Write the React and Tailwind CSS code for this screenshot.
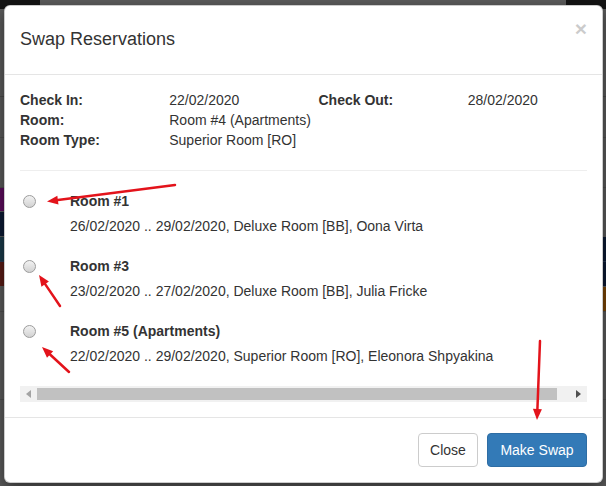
import React from 'react';

const rooms = [
  { name: 'Room #1', info: '26/02/2020 .. 29/02/2020, Deluxe Room [BB], Oona Virta' },
  { name: 'Room #3', info: '23/02/2020 .. 27/02/2020, Deluxe Room [BB], Julia Fricke' },
  { name: 'Room #5 (Apartments)', info: '22/02/2020 .. 29/02/2020, Superior Room [RO], Eleonora Shpyakina' },
];

// dimmed page behind the modal
const pageRows = [
  { h: 'h-[10px]', left: 'bg-[#141414]', right: 'bg-[#141414]', line: 'border-transparent' },
  { h: 'h-[87px]', left: 'bg-[#5c5c5c]', right: 'bg-[#5c5c5c]', line: 'border-[#4a4a4a]' },
  { h: 'h-[41px]', left: 'bg-[#5c5c5c]', right: 'bg-[#5c5c5c]', line: 'border-[#4f4f4f]' },
  { h: 'h-[50px]', left: 'bg-[#5c5c5c]', right: 'bg-[#5c5c5c]', line: 'border-[#4f4f4f]' },
  { h: 'h-[24px]', left: 'bg-[#5e0c5e]', right: 'bg-[#5c5c5c]', line: 'border-transparent' },
  { h: 'h-[25px]', left: 'bg-[#0c1a34]', right: 'bg-[#5c5c5c]', line: 'border-transparent' },
  { h: 'h-[25px]', left: 'bg-[#1b3b4b]', right: 'bg-[#0c1a34]', line: 'border-[#2a3a55]' },
  { h: 'h-[25px]', left: 'bg-[#5b1c16]', right: 'bg-[#0c1a34]', line: 'border-transparent' },
  { h: 'h-[25px]', left: 'bg-[#5c5c5c]', right: 'bg-[#7c4606]', line: 'border-[#4f4f4f]' },
  { h: 'h-[88px]', left: 'bg-[#5c5c5c]', right: 'bg-[#5c5c5c]', line: 'border-[#4f4f4f]' },
  { h: 'h-[86px]', left: 'bg-[#5c5c5c]', right: 'bg-[#5c5c5c]', line: 'border-transparent' },
];

function Arrow({ x1, y1, x2, y2 }) {
  const dx = x2 - x1;
  const dy = y2 - y1;
  const len = Math.hypot(dx, dy);
  const ux = dx / len;
  const uy = dy / len;
  const hl = 11;
  const hw = 4.5;
  const bx = x2 - ux * hl;
  const by = y2 - uy * hl;
  const pts = `${x2},${y2} ${bx - uy * hw},${by + ux * hw} ${bx + uy * hw},${by - ux * hw}`;
  return (
    <g>
      <line x1={x1} y1={y1} x2={bx} y2={by} stroke="#e3131b" strokeWidth="2.5" strokeLinecap="round" />
      <polygon points={pts} fill="#e3131b" />
    </g>
  );
}

function Radio() {
  return (
    <span className="block w-[13px] h-[13px] mt-[3.5px] ml-[3px] rounded-full border border-[#9c9c9c] bg-linear-to-b from-[#f2f2f2] to-[#d2d2d2]" />
  );
}

export default function App() {
  return (
    <div className="relative w-[606px] h-[486px] overflow-hidden bg-[#5c5c5c] font-['Liberation_Sans',Arial,sans-serif] text-[14px] leading-[20px] text-[#333]">
      {pageRows.map((r, i) => (
        <div key={i} className={`flex ${r.h} border-b ${r.line}`}>
          <div className={`w-[40px] ${r.left}`} />
          <div className="flex-1" />
          <div className={`w-[40px] ${r.right}`} />
        </div>
      ))}

      <div className="absolute left-[4px] top-[5px] w-[599px] bg-white border border-black/20 rounded-[6px] shadow-[0_5px_15px_rgba(0,0,0,0.5)]">
        <div className="flex items-start justify-between h-[69px] px-[15px] pt-[20px] border-b border-[#e5e5e5]">
          <h4 className="text-[18px] leading-[26px] text-[#333]">Swap Reservations</h4>
          <span className="text-[21px] font-bold leading-none text-black opacity-20 mt-[-8px]">×</span>
        </div>

        <div className="px-[15px] pt-[15px] pb-[15px]">
          <div className="-mx-[15px] grid grid-cols-4">
            <div className="px-[15px] font-bold">Check In:</div>
            <div className="px-[15px]">22/02/2020</div>
            <div className="px-[15px] font-bold">Check Out:</div>
            <div className="px-[15px]">28/02/2020</div>
            <div className="px-[15px] font-bold">Room:</div>
            <div className="px-[15px] whitespace-nowrap">Room #4 (Apartments)</div>
            <div className="px-[15px]" />
            <div className="px-[15px]" />
            <div className="px-[15px] font-bold">Room Type:</div>
            <div className="px-[15px] whitespace-nowrap">Superior Room [RO]</div>
          </div>

          <div className="h-px bg-[#eee] my-[20px]" />

          {rooms.map((room) => (
            <div key={room.name} className="flex mb-[20px]">
              <div className="w-[50px] shrink-0">
                <Radio />
              </div>
              <div>
                <div className="font-bold">{room.name}</div>
                <div className="mt-[5px] whitespace-nowrap">{room.info}</div>
              </div>
            </div>
          ))}

          <div className="flex items-center h-[16px] bg-[#f1f1f1]">
            <div className="w-[17px] h-full flex items-center justify-center">
              <svg width="5" height="8" viewBox="0 0 5 8">
                <polygon points="5,0 0,4 5,8" fill="#a3a3a3" />
              </svg>
            </div>
            <div className="w-[520px] h-[12px] bg-[#c1c1c1]" />
            <div className="flex-1" />
            <div className="w-[17px] h-full flex items-center justify-center">
              <svg width="5" height="8" viewBox="0 0 5 8">
                <polygon points="0,0 5,4 0,8" fill="#505050" />
              </svg>
            </div>
          </div>
        </div>

        <div className="flex justify-end gap-[9px] p-[15px] border-t border-[#e5e5e5]">
          <button className="w-[60px] h-[34px] border border-[#ccc] rounded-[4px] bg-white text-[#333] text-[14px]">
            Close
          </button>
          <button className="w-[100px] h-[34px] border border-[#2e6da4] rounded-[4px] bg-[#337ab7] text-white text-[14px]">
            Make Swap
          </button>
        </div>
      </div>

      <svg className="absolute inset-0 pointer-events-none" width="606" height="486" viewBox="0 0 606 486">
        <Arrow x1={175} y1={185} x2={47} y2={201.5} />
        <Arrow x1={60} y1={306} x2={39} y2={275} />
        <Arrow x1={69} y1={372} x2={42} y2={347} />
        <Arrow x1={540} y1={341} x2={537} y2={420} />
      </svg>
    </div>
  );
}
